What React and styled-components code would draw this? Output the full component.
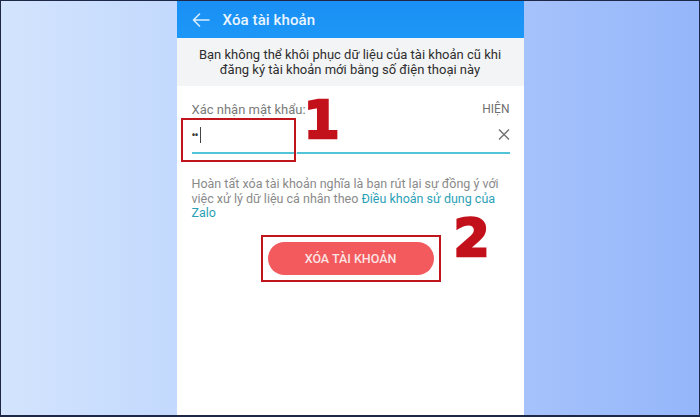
import React from "react";
import styled, { createGlobalStyle } from "styled-components";

const GlobalStyle = createGlobalStyle`
  html, body {
    margin: 0;
    padding: 0;
  }
  body {
    font-family: Roboto, "Noto Sans", "Liberation Sans", sans-serif;
  }
  * {
    box-sizing: border-box;
  }
`;

const Page = styled.div`
  width: 700px;
  height: 417px;
  display: flex;
  justify-content: center;
  border: 1px solid #1d2848;
  border-bottom-width: 2px;
  background: linear-gradient(
    90deg,
    #d3e4fd 0%,
    #c3d9fd 25%,
    #a6c2fb 75%,
    #94b6fa 100%
  );
  overflow: hidden;
`;

const Phone = styled.div`
  width: 347px;
  height: 100%;
  background: #ffffff;
  display: flex;
  flex-direction: column;
`;

const AppBar = styled.div`
  height: 37px;
  flex-shrink: 0;
  display: flex;
  align-items: center;
  gap: 13px;
  padding-left: 15px;
  background: linear-gradient(180deg, #1a8ff4 0%, #1c97f7 100%);
`;

const BarTitle = styled.span`
  font-size: 15px;
  font-weight: 500;
  color: #eaf5ff;
  letter-spacing: 0.1px;
`;

const Notice = styled.div`
  height: 48px;
  flex-shrink: 0;
  padding-top: 9px;
  background: #f3f4f6;
  text-align: center;
  font-size: 13px;
  line-height: 15px;
  color: #2e2e2e;
`;

const Body = styled.div`
  padding: 0 14px 0 15px;
  display: flex;
  flex-direction: column;
`;

const Field = styled.div`
  position: relative;
  margin-top: 15px;
`;

const LabelRow = styled.div`
  display: flex;
  justify-content: space-between;
  align-items: center;
  height: 16px;
`;

const Label = styled.span`
  font-size: 13px;
  color: #7a7a7a;
`;

const ShowToggle = styled.span`
  font-size: 12px;
  font-weight: 400;
  color: #6f6f6f;
`;

const InputRow = styled.div`
  height: 37px;
  display: flex;
  align-items: center;
  justify-content: space-between;
  border-bottom: 2px solid #52c4d8;
`;

const Masked = styled.span`
  display: flex;
  align-items: center;
  gap: 2px;
  font-size: 12px;
  letter-spacing: -1px;
  color: #333;
`;

const Caret = styled.span`
  width: 1px;
  height: 16px;
  background: #444;
`;

const Hint = styled.p`
  margin: 23px 0 0;
  font-size: 12.5px;
  line-height: 14.6px;
  color: #8a8a8a;
`;

const Link = styled.span`
  color: #2b9fb6;
  font-weight: 400;
`;

const ButtonFrame = styled.div`
  position: relative;
  align-self: center;
  margin-top: 14px;
  padding: 5px;
  border: 2px solid #c1151e;
`;

const DeleteButton = styled.button`
  width: 166px;
  height: 33px;
  border: none;
  border-radius: 17px;
  background: #f25a5d;
  color: #fde3e3;
  font-family: Roboto, "Noto Sans", sans-serif;
  font-size: 12.5px;
  font-weight: 500;
  display: block;
`;

const Highlight = styled.div`
  position: absolute;
  left: -11px;
  top: 17px;
  width: 115px;
  height: 44px;
  border: 2px solid #c1151e;
  box-shadow: 0 0 0 1px rgba(255, 255, 255, 0.8);
`;

const StepNumber = styled.span`
  position: absolute;
  left: ${(p) => p.$left}px;
  top: ${(p) => p.$top}px;
  font-family: "DejaVu Sans", "Liberation Sans", sans-serif;
  font-weight: 700;
  font-size: 52px;
  line-height: 1;
  color: #c3111b;
  -webkit-text-stroke: 2.5px #c3111b;
  text-shadow: 0 0 1px #fff;
`;

const BackArrow = () => (
  <svg width="18" height="14" viewBox="0 0 18 14" fill="none">
    <path
      d="M17 7H1.5M7.5 1L1.5 7l6 6"
      stroke="#d8edff"
      strokeWidth="1.6"
      strokeLinecap="round"
      strokeLinejoin="round"
    />
  </svg>
);

const ClearIcon = () => (
  <svg width="12" height="11" viewBox="0 0 12 11" fill="none">
    <path d="M1 0.5l10 10M11 0.5l-10 10" stroke="#777" strokeWidth="1.5" />
  </svg>
);

const App = () => {
  return (
    <>
      <GlobalStyle />
      <Page>
        <Phone>
          <AppBar>
            <BackArrow />
            <BarTitle>Xóa tài khoản</BarTitle>
          </AppBar>
          <Notice>
            Bạn không thể khôi phục dữ liệu của tài khoản cũ khi
            <br />
            đăng ký tài khoản mới bằng số điện thoại này
          </Notice>
          <Body>
            <Field>
              <LabelRow>
                <Label>Xác nhận mật khẩu:</Label>
                <ShowToggle>HIỆN</ShowToggle>
              </LabelRow>
              <InputRow>
                <Masked>
                  ••
                  <Caret />
                </Masked>
                <ClearIcon />
              </InputRow>
              <Highlight />
              <StepNumber $left={112} $top={-7}>
                1
              </StepNumber>
            </Field>
            <Hint>
              Hoàn tất xóa tài khoản nghĩa là bạn rút lại sự đồng ý với
              việc xử lý dữ liệu cá nhân theo{" "}
              <Link>Điều khoản sử dụng của Zalo</Link>
            </Hint>
            <ButtonFrame>
              <DeleteButton>XÓA TÀI KHOẢN</DeleteButton>
              <StepNumber $left={191} $top={-25}>
                2
              </StepNumber>
            </ButtonFrame>
          </Body>
        </Phone>
      </Page>
    </>
  );
};

export default App;
